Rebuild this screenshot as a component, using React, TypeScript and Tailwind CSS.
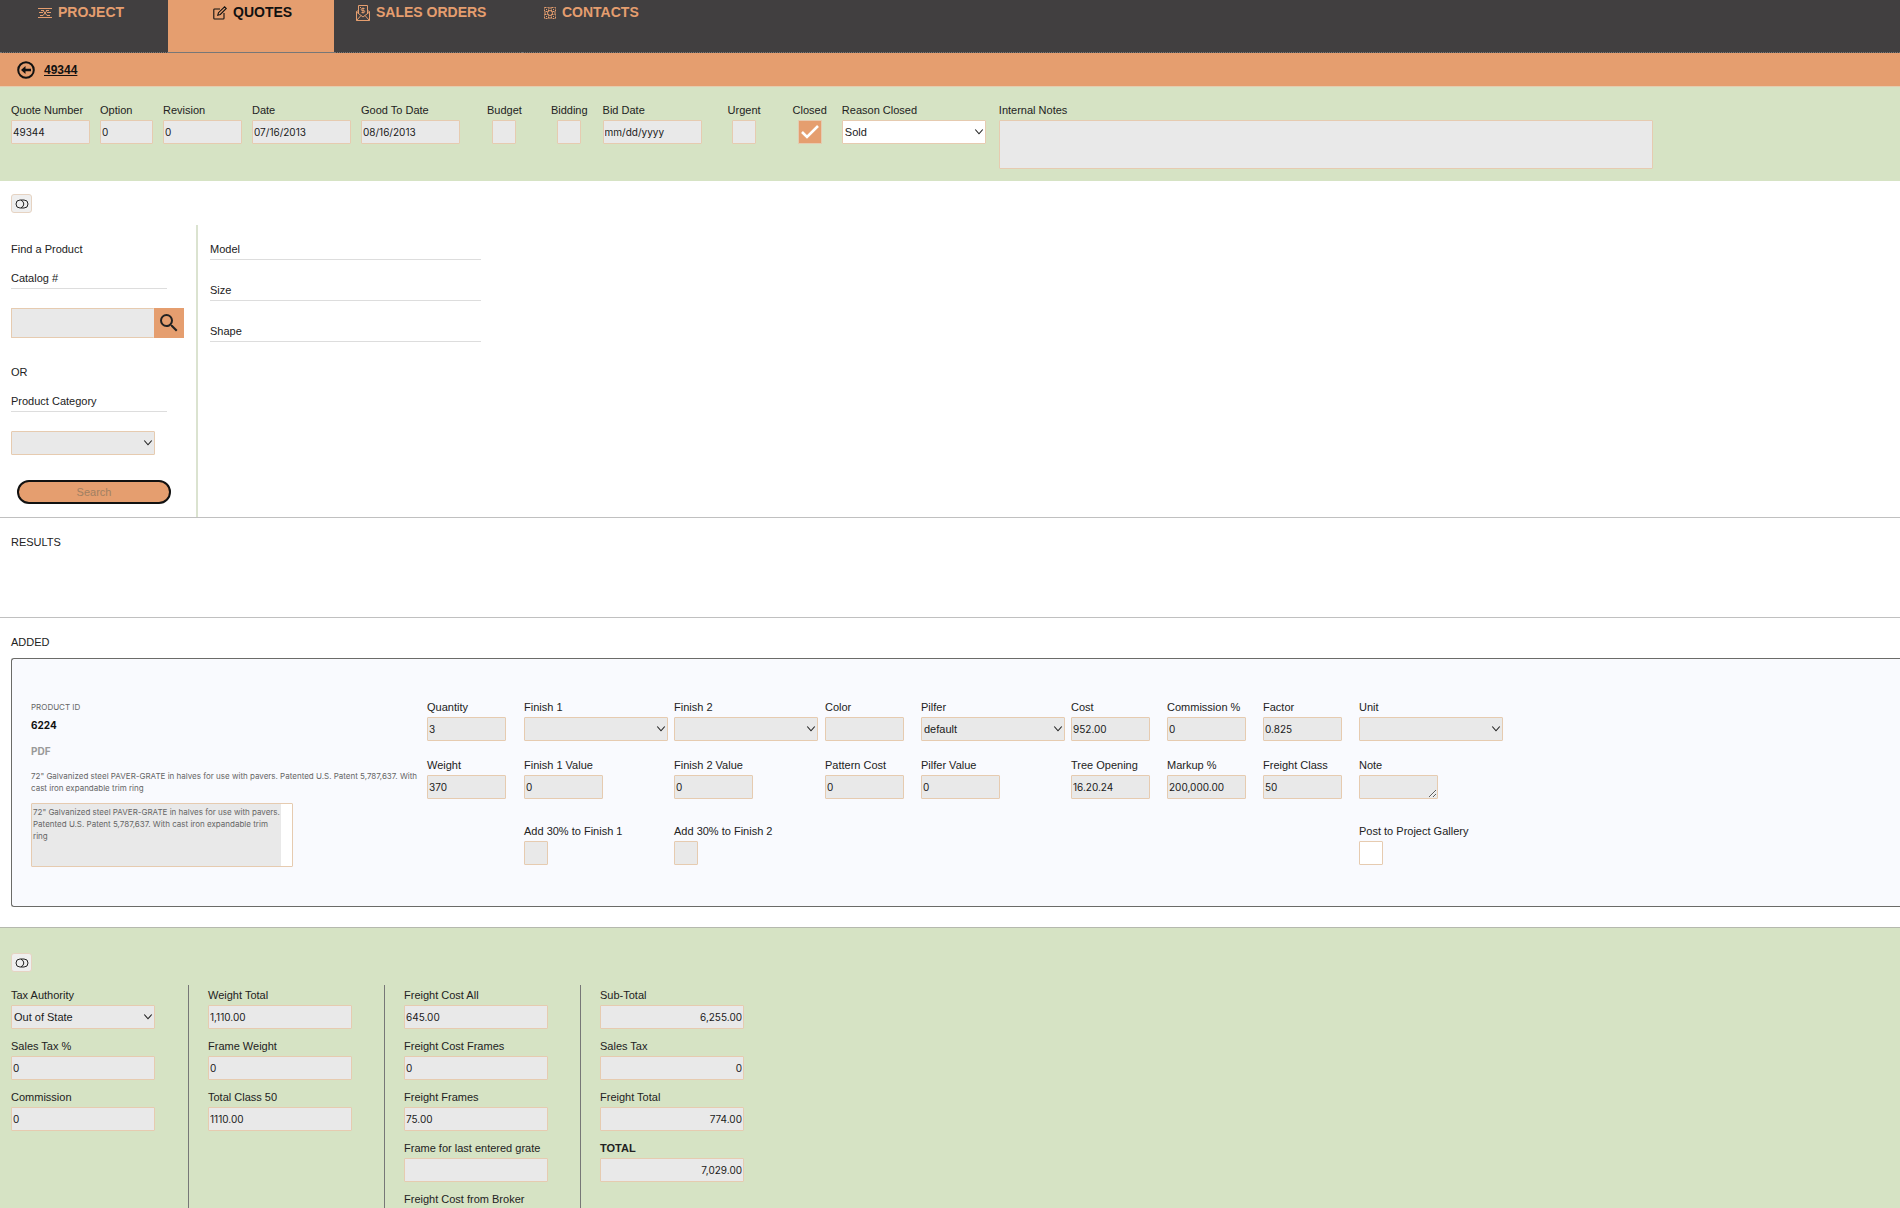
import type { ReactNode } from "react"
import { clsx } from "clsx"
import { MdSearch } from "react-icons/md"

const box = "rounded-[1px] border border-[#e6cbb0] bg-[#e9e9e9] text-[#1a1a1a]"
const inputText = "font-['Inter',sans-serif] text-[10px] leading-3"

function slug(label: string) {
  return label.toLowerCase().replace(/[^a-z0-9]+/g, "-")
}

type FieldProps = {
  label: string
  value?: string
  width?: string
  right?: boolean
  bold?: boolean
}

function FieldLabel({ label, bold }: { label: string; bold?: boolean }) {
  return (
    <label htmlFor={slug(label)} className={clsx("h-[18px] leading-4 whitespace-nowrap", bold && "font-bold")}>
      {label}
    </label>
  )
}

function TextField({ label, value = "", width = "w-[79px]", right, bold }: FieldProps) {
  return (
    <div className="flex flex-col items-start">
      <FieldLabel label={label} bold={bold} />
      <input
        id={slug(label)}
        defaultValue={value}
        className={clsx(box, inputText, "h-6 px-px", width, right && "text-right")}
      />
    </div>
  )
}

function Select({ id, value = "", white }: { id: string; value?: string; white?: boolean }) {
  return (
    <div className="relative w-36">
      <select
        id={id}
        defaultValue={value}
        className={clsx(
          "block h-6 w-full appearance-none rounded-[1px] border border-[#e6cbb0] px-0.5 text-[11px] leading-4 text-[#1a1a1a]",
          white ? "bg-white" : "bg-[#e9e9e9]",
        )}
      >
        <option value={value}>{value}</option>
      </select>
      <svg
        viewBox="0 0 8 6"
        className="pointer-events-none absolute top-2 right-0.5 h-2 w-2.5"
        fill="none"
        stroke="#222"
        strokeWidth="0.9"
      >
        <path d="M1 1l3 3.400L7 1" />
      </svg>
    </div>
  )
}

function SelectField({ label, value, white }: { label: string; value?: string; white?: boolean }) {
  return (
    <div className="flex flex-col items-start">
      <FieldLabel label={label} />
      <Select id={slug(label)} value={value} white={white} />
    </div>
  )
}

type CheckProps = { label: string; checked?: boolean; center?: boolean; white?: boolean }

function CheckField({ label, checked, center, white }: CheckProps) {
  return (
    <div className={clsx("flex flex-col", center ? "items-center" : "items-start")}>
      <FieldLabel label={label} />
      <div className="relative h-6 w-6">
        <input
          id={slug(label)}
          type="checkbox"
          defaultChecked={checked}
          className={clsx(
            "block h-6 w-6 appearance-none rounded-[1px] border border-[#e6cbb0] checked:bg-[#e59e6f]",
            white ? "bg-white" : "bg-[#e9e9e9]",
          )}
        />
        {checked && (
          <svg
            viewBox="0 0 24 24"
            className="pointer-events-none absolute inset-0"
            fill="none"
            stroke="#fff"
            strokeWidth="2.600"
          >
            <path d="M4 12l5 5L20 6" />
          </svg>
        )}
      </div>
    </div>
  )
}

function ToggleButton({ name }: { name: string }) {
  return (
    <button
      type="button"
      aria-label={name}
      className="flex h-[19px] w-[21px] items-center justify-center rounded-[3px] border border-[#e6d3c2] bg-[#efefef]"
    >
      <svg viewBox="0 0 14 10" width="14" height="10" fill="none" stroke="#222" strokeWidth="1">
        <path d="M5 1h4a4 4 0 0 1 0 8H5a4 4 0 0 1 0-8z" />
        <path d="M6 1.200q2.800 1.200 2.800 3.800T6 8.800" />
      </svg>
    </button>
  )
}

function ProjectIcon() {
  return (
    <svg viewBox="0 0 14 12" width="14" height="12" fill="none" stroke="currentColor" strokeWidth="1">
      <path d="M0 1.500h14M0 10.500h14M1 5.500h4M9 5.500h4M3 3.500h3M8 3.500h3M2 8.500h3M9 8.500h3" />
      <path d="M5 3.500l4 5M9 3.500l-4 5" />
    </svg>
  )
}

function QuotesIcon() {
  return (
    <svg viewBox="0 0 14 14" width="14" height="14" fill="none" stroke="currentColor" strokeWidth="1.100">
      <path d="M7 3H1.600a.8.8 0 0 0-.8.8v8.400a.8.8 0 0 0 .8.800h8.600a.8.8 0 0 0 .8-.8V7" />
      <path d="M4.800 9.200l.7-2.500L11.600.800l1.700 1.700L7.300 8.500z" />
    </svg>
  )
}

function SalesIcon() {
  return (
    <svg viewBox="0 0 14 16" width="14" height="16" fill="none" stroke="currentColor" strokeWidth="1">
      <path d="M2.500 9V.5h9V9M.5 6.500v9h13v-9l-2-1M2.500 5.500l-2 1M.5 7l6.500 5L13.500 7M.5 15.500l4.500-5M13.500 15.500L9 10.500" />
      <path d="M8.500 3.500H6.200a1 1 0 0 0 0 2h1.500a1 1 0 0 1 0 2H5.500M7 2.500v6M4 2.500h1" />
    </svg>
  )
}

function ContactsIcon() {
  return (
    <svg viewBox="0 0 12 12" width="12" height="12" fill="none" stroke="currentColor" strokeWidth="1">
      <path d="M.5.5h4v4h-4zM7.500.5h4v4h-4zM.5 7.500h4v4h-4zM7.500 7.500h4v4h-4z" strokeDasharray="2 1" />
      <circle cx="6" cy="6" r="2.500" />
      <path d="M2 2.500h1M9 2.500h1M2 9.500h1M9 9.500h1M6 0v2M6 10v2M0 6h2M10 6h2" />
    </svg>
  )
}

type TabProps = { icon: ReactNode; label: string; className: string; active?: boolean }

function NavTab({ icon, label, className, active }: TabProps) {
  return (
    <a
      href="#"
      className={clsx(
        "flex h-[53px] gap-1.5 border-b pt-px",
        active ? "border-[#777] bg-[#e59e6f] text-[#111]" : "border-dotted border-[#777] text-[#e59e6f]",
        className,
      )}
    >
      <span className="flex h-6 items-center">{icon}</span>
      <span className="text-sm leading-[22px] font-bold">{label}</span>
    </a>
  )
}

function Header() {
  return (
    <header>
      <nav className="flex bg-[#413f40]">
        <NavTab icon={<ProjectIcon />} label="PROJECT" className="w-[168px] pl-[38px]" />
        <NavTab icon={<QuotesIcon />} label="QUOTES" className="w-[166px] pl-[45px]" active />
        <NavTab icon={<SalesIcon />} label="SALES ORDERS" className="w-[188px] pl-[22px]" />
        <NavTab icon={<ContactsIcon />} label="CONTACTS" className="flex-1 pl-[22px]" />
      </nav>
      <div className="flex h-[33px] items-center gap-[9px] bg-[#e59e6f] pl-[17px] text-[#111]">
        <button type="button" aria-label="Back">
          <svg viewBox="0 0 18 18" width="18" height="18" className="block">
            <circle cx="9" cy="9" r="7.800" fill="none" stroke="currentColor" strokeWidth="2" />
            <path d="M4 9l4.500-4v2.700H14v2.600H8.500V13z" fill="currentColor" />
          </svg>
        </button>
        <a href="#" className="text-xs font-bold underline">
          49344
        </a>
      </div>
    </header>
  )
}

function QuoteDetails() {
  return (
    <section className="flex h-[95px] border-t border-[#e4cdb0] bg-[#d6e3c4] pt-[15px] pl-[11px]">
      <div className="flex gap-2.5">
        <TextField label="Quote Number" value="49344" />
        <TextField label="Option" value="0" width="w-[53px]" />
        <TextField label="Revision" value="0" />
        <TextField label="Date" value="07/16/2013" width="w-[99px]" />
        <TextField label="Good To Date" value="08/16/2013" width="w-[99px]" />
      </div>
      <div className="ml-[27px] flex gap-[29px]">
        <CheckField label="Budget" center />
        <CheckField label="Bidding" center />
      </div>
      <div className="ml-[15px]">
        <TextField label="Bid Date" value="mm/dd/yyyy" width="w-[99px]" />
      </div>
      <div className="mr-[15px] ml-[26px] flex gap-8">
        <CheckField label="Urgent" center />
        <CheckField label="Closed" checked center />
      </div>
      <div className="flex gap-[13px]">
        <SelectField label="Reason Closed" value="Sold" white />
        <div className="flex flex-col">
          <FieldLabel label="Internal Notes" />
          <textarea id="internal-notes" className={clsx(box, inputText, "h-[49px] w-[654px] resize-none")} />
        </div>
      </div>
    </section>
  )
}

function ProductFinder() {
  return (
    <section className="border-b border-[#c0c0c0]">
      <div className="pt-[13px] pb-3 pl-[11px]">
        <ToggleButton name="Toggle product finder" />
      </div>
      <div className="flex h-[292px]">
        <div className="w-[198px] border-r-2 border-[#dbe3d0] pt-4 pl-[11px]">
          <p className="h-[29px] leading-4">Find a Product</p>
          <label htmlFor="catalog" className="block h-[19px] w-[156px] border-b border-[#ddd] leading-4">
            Catalog #
          </label>
          <div className="mt-[19px] flex">
            <input id="catalog" className={clsx(box, inputText, "h-[30px] w-[143px] border-r-0 px-px")} />
            <button
              type="button"
              aria-label="Search catalog"
              className="flex h-[30px] w-[30px] items-center justify-center bg-[#e59e6f] text-[#222]"
            >
              <MdSearch size={24} />
            </button>
          </div>
          <p className="mt-[26px] h-[29px] leading-4">OR</p>
          <label htmlFor="category" className="block h-[19px] w-[156px] border-b border-[#ddd] leading-4">
            Product Category
          </label>
          <div className="mt-[19px]">
            <Select id="category" />
          </div>
          <button
            type="button"
            className="mt-[25px] ml-1.5 block h-6 w-[154px] rounded-full border-2 border-[#111] bg-[#e59e6f] leading-5 text-[#a18062]"
          >
            Search
          </button>
        </div>
        <div className="w-[283px] pt-4 pl-3">
          {["Model", "Size", "Shape"].map((name) => (
            <p key={name} className="mb-[22px] h-[19px] border-b border-[#ddd] leading-4">
              {name}
            </p>
          ))}
        </div>
      </div>
    </section>
  )
}

const description =
  '72" Galvanized steel PAVER-GRATE in halves for use with pavers. Patented U.S. Patent 5,787,637. With cast iron expandable trim ring'

function AddedProduct() {
  return (
    <article className="ml-[11px] flex h-[249px] rounded-l-[3px] border border-r-0 border-[#6b6b68] bg-[#f9fafe] pt-10 pl-[19px]">
      <div className="w-[396px] shrink-0 font-['Inter',sans-serif] text-[8px] leading-3 text-[#666]">
        <p className="h-[18px] leading-4">PRODUCT ID</p>
        <h3 className="h-[26px] text-[10px] leading-4 font-bold text-[#111]">6224</h3>
        <a href="#" className="block h-[27px] text-[10px] leading-4 font-bold text-[#999]">
          PDF
        </a>
        <p className="w-[394px]">{description}</p>
        <div className="mt-[9px] h-16 w-[262px] rounded-[1px] border border-[#e6cbb0] bg-white">
          <textarea
            aria-label="Product description"
            defaultValue={description}
            className="block h-full w-[249px] resize-none bg-[#e9e9e9] px-px py-0.5"
          />
        </div>
      </div>
      <div className="grid auto-rows-max grid-cols-[97px_150px_151px_96px_150px_96px_96px_96px_150px]">
        <TextField label="Quantity" value="3" />
        <SelectField label="Finish 1" />
        <SelectField label="Finish 2" />
        <TextField label="Color" />
        <SelectField label="Pilfer" value="default" />
        <TextField label="Cost" value="952.00" />
        <TextField label="Commission %" value="0" />
        <TextField label="Factor" value="0.825" />
        <SelectField label="Unit" />

        <div className="col-span-9 h-4" />

        <TextField label="Weight" value="370" />
        <TextField label="Finish 1 Value" value="0" />
        <TextField label="Finish 2 Value" value="0" />
        <TextField label="Pattern Cost" value="0" />
        <TextField label="Pilfer Value" value="0" />
        <TextField label="Tree Opening" value="16.20.24" />
        <TextField label="Markup %" value="200,000.00" />
        <TextField label="Freight Class" value="50" />
        <div className="flex flex-col items-start">
          <FieldLabel label="Note" />
          <textarea id="note" className={clsx(box, inputText, "h-6 w-[79px]")} />
        </div>

        <div className="col-span-9 h-6" />

        <div className="col-start-2">
          <CheckField label="Add 30% to Finish 1" />
        </div>
        <CheckField label="Add 30% to Finish 2" />
        <div className="col-start-9">
          <CheckField label="Post to Project Gallery" white />
        </div>
      </div>
    </article>
  )
}

function Column({ children }: { children: ReactNode }) {
  return <div className="flex w-[196px] flex-col gap-[9px] border-l border-[#777] pt-0.5 pb-6 pl-[19px]">{children}</div>
}

function Totals() {
  return (
    <section className="border-t border-[#b5b9ae] bg-[#d6e3c4] pt-[25px]">
      <div className="pb-[13px] pl-[11px]">
        <ToggleButton name="Toggle totals" />
      </div>
      <div className="flex pl-[11px]">
        <div className="flex w-[177px] flex-col gap-[9px] pt-0.5">
          <SelectField label="Tax Authority" value="Out of State" />
          <TextField label="Sales Tax %" value="0" width="w-36" />
          <TextField label="Commission" value="0" width="w-36" />
        </div>
        <Column>
          <TextField label="Weight Total" value="1,110.00" width="w-36" />
          <TextField label="Frame Weight" value="0" width="w-36" />
          <TextField label="Total Class 50" value="1110.00" width="w-36" />
        </Column>
        <Column>
          <TextField label="Freight Cost All" value="645.00" width="w-36" />
          <TextField label="Freight Cost Frames" value="0" width="w-36" />
          <TextField label="Freight Frames" value="75.00" width="w-36" />
          <TextField label="Frame for last entered grate" width="w-36" />
          <TextField label="Freight Cost from Broker" width="w-36" />
        </Column>
        <Column>
          <TextField label="Sub-Total" value="6,255.00" width="w-36" right />
          <TextField label="Sales Tax" value="0" width="w-36" right />
          <TextField label="Freight Total" value="774.00" width="w-36" right />
          <TextField label="TOTAL" value="7,029.00" width="w-36" right bold />
        </Column>
      </div>
    </section>
  )
}

export default function App() {
  return (
    <div className="h-screen overflow-x-hidden overflow-y-auto bg-white font-['Liberation_Sans',Arial,sans-serif] text-[11px] text-[#222] [scrollbar-width:none]">
      <Header />
      <main>
        <QuoteDetails />
        <ProductFinder />
        <section className="h-[100px] border-b border-[#c0c0c0] pt-4 pl-[11px]">
          <h2 className="leading-4">RESULTS</h2>
        </section>
        <section className="pt-4 pb-5">
          <h2 className="mb-2 pl-[11px] leading-4">ADDED</h2>
          <AddedProduct />
        </section>
        <Totals />
      </main>
    </div>
  )
}
